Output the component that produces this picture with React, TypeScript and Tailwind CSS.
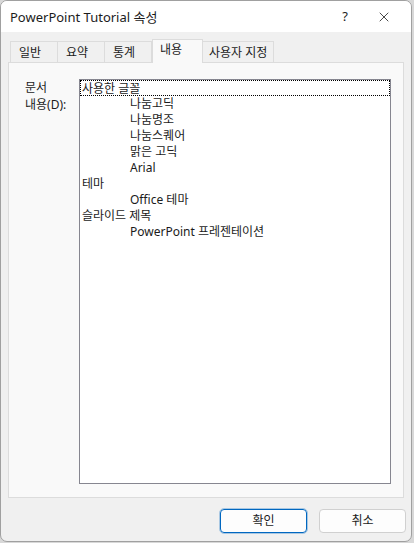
import { X } from "lucide-react";

const tabs = ["일반", "요약", "통계", "내용", "사용자 지정"];

const items = [
  { text: "사용한 글꼴", indent: false },
  { text: "나눔고딕", indent: true },
  { text: "나눔명조", indent: true },
  { text: "나눔스퀘어", indent: true },
  { text: "맑은 고딕", indent: true },
  { text: "Arial", indent: true },
  { text: "테마", indent: false },
  { text: "Office 테마", indent: true },
  { text: "슬라이드 제목", indent: false },
  { text: "PowerPoint 프레젠테이션", indent: true },
];

const font = "font-['Segoe_UI','Noto_Sans','Noto_Sans_CJK_KR',sans-serif]";

export default function App() {
  return (
    <div className={`w-[414px] h-[543px] bg-[#d8d8d8] ${font} text-[12px] text-[#1b1b1b]`}>
      <div className="w-[412px] h-[542px] bg-[#f0f0f0] rounded-[7px] border border-[#a0a0a0] flex flex-col overflow-hidden">
        {/* title bar */}
        <div className="h-[31px] bg-white flex items-center pl-[9px] pr-[19px] shrink-0">
          <span className="flex-1 leading-none text-[13px] pt-[1px]">PowerPoint Tutorial 속성</span>
          <span className="w-[16px] text-center text-[13px] mr-[23px]">?</span>
          <span className="w-[16px] flex justify-center">
            <X size={16} strokeWidth={1.2} />
          </span>
        </div>

        {/* tabs */}
        <div className="flex items-end pl-[9px] h-[30px] shrink-0">
          {tabs.map((t, i) =>
            i === 3 ? (
              <div
                key={t}
                className="h-[24px] px-[7px] w-[51px] bg-[#f9f9f9] border border-b-0 border-[#dcdcdc] -mb-px relative z-10 leading-[18px] pt-[1px] whitespace-nowrap"
              >
                {t}
              </div>
            ) : (
              <div
                key={t}
                className={`h-[21px] border border-b-0 border-[#dcdcdc] bg-[#f0f0f0] leading-[21px] whitespace-nowrap ${
                  i === 4 ? "w-[72px] px-[6px]" : "w-[48px] px-[8px]"
                } ${i === 0 ? "" : "-ml-px"}`}
              >
                {t}
              </div>
            )
          )}
        </div>

        {/* panel */}
        <div className="mx-[7px] h-[436px] bg-[#f9f9f9] border border-[#dcdcdc] flex pt-[16px] pl-[16px] shrink-0">
          <div className="w-[54px] leading-[17px]">
            <div>문서</div>
            <div>내용(D):</div>
          </div>
          <div className="w-[312px] h-[405px] bg-white border border-[#868690]">
            {items.map((it, i) => (
              <div
                key={i}
                className={`h-[16px] leading-[16px] whitespace-nowrap ${
                  i === 0 ? "border border-dotted border-black leading-[14px] pl-[1px]" : "pl-[2px]"
                } ${it.indent ? "pl-[50px]" : ""}`}
              >
                {it.text}
              </div>
            ))}
          </div>
        </div>

        {/* buttons */}
        <div className="flex justify-end gap-[12px] pr-[5px] mt-[11px]">
          <button className="w-[87px] h-[24px] bg-[#fdfdfd] border border-[#0067c0] rounded-[4px] outline outline-1 outline-[#0067c0]/30">
            확인
          </button>
          <button className="w-[87px] h-[24px] bg-[#fdfdfd] border border-[#d0d0d0] rounded-[4px]">
            취소
          </button>
        </div>
      </div>
    </div>
  );
}
